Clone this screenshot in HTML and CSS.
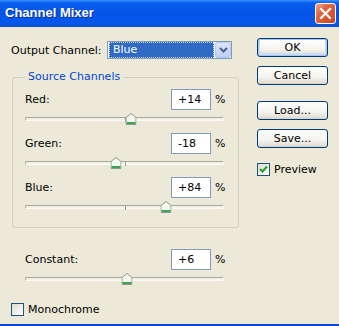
FILE: index.html
```html
<!DOCTYPE html>
<html lang="en">
<head>
    <meta charset="UTF-8">
    <meta name="viewport" content="width=device-width, initial-scale=1.0">
    <title>Channel Mixer</title>
    <link rel="stylesheet" href="styles.css">
</head>
<body>
    <div class="window">
        <!-- title bar -->
        <div class="titlebar">
            <span class="title">Channel Mixer</span>
            <span class="close">
                <svg width="13" height="13" viewBox="0 0 13 13"><path d="M2 2 L11 11 M11 2 L2 11" stroke="#fff" stroke-width="2.2" stroke-linecap="square"/></svg>
            </span>
        </div>

        <div class="client">
            <div class="main">
                <div class="output-row">
                    <span class="output-label">Output Channel:</span>
                    <div class="select">
                        <span class="select-value">Blue</span>
                        <span class="select-arrow">
                            <svg width="9" height="6" viewBox="0 0 9 6"><path d="M1 1 L4.5 4.5 L8 1" fill="none" stroke="#4d6185" stroke-width="2"/></svg>
                        </span>
                    </div>
                </div>

                <fieldset class="group">
                    <legend>Source Channels</legend>

                    <div class="channel">
                        <div class="channel-head">
                            <span class="name">Red:</span>
                            <span class="field">+14</span>
                            <span class="pct">%</span>
                        </div>
                        <div class="slider">
                            <span class="track"></span>
                            <span class="tick"></span>
                            <span class="thumb" style="left: 53.5%"><svg width="11" height="12" viewBox="0 0 11 12"><path d="M0.5 11.5 V4.5 L5.5 0.5 L10.5 4.5 V11.5 Z" fill="#f4f8f0" stroke="#8c9a8c"/><path d="M1 10 H10" stroke="#3aa651" stroke-width="2"/></svg></span>
                        </div>
                    </div>

                    <div class="channel">
                        <div class="channel-head">
                            <span class="name">Green:</span>
                            <span class="field">-18</span>
                            <span class="pct">%</span>
                        </div>
                        <div class="slider">
                            <span class="track"></span>
                            <span class="tick"></span>
                            <span class="thumb" style="left: 45.5%"><svg width="11" height="12" viewBox="0 0 11 12"><path d="M0.5 11.5 V4.5 L5.5 0.5 L10.5 4.5 V11.5 Z" fill="#f4f8f0" stroke="#8c9a8c"/><path d="M1 10 H10" stroke="#3aa651" stroke-width="2"/></svg></span>
                        </div>
                    </div>

                    <div class="channel">
                        <div class="channel-head">
                            <span class="name">Blue:</span>
                            <span class="field">+84</span>
                            <span class="pct">%</span>
                        </div>
                        <div class="slider">
                            <span class="track"></span>
                            <span class="tick"></span>
                            <span class="thumb" style="left: 71%"><svg width="11" height="12" viewBox="0 0 11 12"><path d="M0.5 11.5 V4.5 L5.5 0.5 L10.5 4.5 V11.5 Z" fill="#f4f8f0" stroke="#8c9a8c"/><path d="M1 10 H10" stroke="#3aa651" stroke-width="2"/></svg></span>
                        </div>
                    </div>
                </fieldset>

                <div class="channel constant">
                    <div class="channel-head">
                        <span class="name">Constant:</span>
                        <span class="field">+6</span>
                        <span class="pct">%</span>
                    </div>
                    <div class="slider">
                        <span class="track"></span>
                        <span class="thumb" style="left: 51.5%"><svg width="11" height="12" viewBox="0 0 11 12"><path d="M0.5 11.5 V4.5 L5.5 0.5 L10.5 4.5 V11.5 Z" fill="#f4f8f0" stroke="#8c9a8c"/><path d="M1 10 H10" stroke="#3aa651" stroke-width="2"/></svg></span>
                    </div>
                </div>

                <div class="check mono">
                    <span class="box"></span>
                    <span>Monochrome</span>
                </div>
            </div>

            <div class="side">
                <span class="btn default">OK</span>
                <span class="btn">Cancel</span>
                <span class="btn load">Load...</span>
                <span class="btn">Save...</span>
                <div class="check preview">
                    <span class="box checked">
                        <svg width="11" height="11" viewBox="0 0 11 11"><path d="M2 5 L4.5 7.5 L9 2.5" fill="none" stroke="#21a121" stroke-width="2"/></svg>
                    </span>
                    <span>Preview</span>
                </div>
            </div>
        </div>
    </div>
</body>
</html>
```

FILE: styles.css
```css
/* base */
body {
    margin: 0;
    padding: 0;
    font-family: 'DejaVu Sans', 'Verdana', sans-serif;
    font-size: 11px;
    color: #000;
}
.window {
    width: 339px;
    height: 324px;
    background: #ece9d8;
    border-bottom: 2px solid #0a46d8;
    display: flex;
    flex-direction: column;
    overflow: hidden;
}

/* title bar */
.titlebar {
    height: 27px;
    flex: none;
    display: flex;
    align-items: center;
    justify-content: space-between;
    padding: 0 3px 0 5px;
    background: linear-gradient(to bottom, #3d95ff 0%, #0a5ff0 10%, #0554e6 45%, #0658ea 85%, #0a4fd8 100%);
}
.title {
    font-family: 'Liberation Sans', Arial, sans-serif;
    font-weight: bold;
    font-size: 13px;
    color: #fff;
    text-shadow: 1px 1px 0 #0a2f9a;
    margin-top: -2px;
}
.close {
    width: 19px;
    height: 19px;
    margin-top: -1px;
    border: 1px solid #fff;
    border-radius: 3px;
    background: linear-gradient(135deg, #f0a48c 0%, #df6642 35%, #c8461f 100%);
    display: flex;
    align-items: center;
    justify-content: center;
}

/* dialog body */
.client {
    flex: 1;
    display: flex;
    justify-content: space-between;
    padding: 0 11px 0 10px;
}
.main {
    width: 229px;
    padding-top: 14px;
}
.output-row {
    display: flex;
    align-items: center;
    height: 18px;
}
.output-label {
    width: 96px;
    padding-left: 1px;
}
.select {
    width: 123px;
    height: 16px;
    border: 1px solid #7f9db9;
    background: #fff;
    display: flex;
    padding: 0;
}
.select-value {
    flex: 1;
    margin: 0 1px 0 1px;
    background: #316ac5;
    color: #fff;
    outline: 1px dotted #c8d8f0;
    outline-offset: -1px;
    padding-left: 4px;
    line-height: 16px;
}
.select-arrow {
    width: 16px;
    height: 16px;
    box-sizing: border-box;
    border: 1px solid #b9c9ef;
    border-radius: 2px;
    background: linear-gradient(to bottom, #dce6fd, #bccdf6);
    display: flex;
    align-items: center;
    justify-content: center;
}

/* group box */
.group {
    margin: 11px 0 0 2px;
    padding: 5px 12px 14px 12px;
    border: 1px solid #d0d0bf;
    border-radius: 3px;
    width: 201px;
}
.group legend {
    color: #0046d5;
    line-height: 14px;
    padding: 0 3px;
    margin-left: 0;
}

/* channel rows */
.channel + .channel {
    margin-top: 8px;
}
.channel-head {
    display: flex;
    align-items: center;
    width: 201px;
    height: 21px;
}
.name {
    flex: 1;
}
.field {
    width: 40px;
    height: 21px;
    box-sizing: border-box;
    border: 1px solid #7f9db9;
    background: #fff;
    padding-left: 6px;
    line-height: 19px;
}
.pct {
    width: 11px;
    margin-left: 4px;
}
.slider {
    position: relative;
    width: 199px;
    height: 12px;
    margin-top: 3px;
    display: flex;
    align-items: center;
}
.track {
    flex: 1;
    height: 2px;
    border-radius: 2px;
    border: 1px solid;
    border-color: #a6a598 #fbfbf8 #fbfbf8 #a6a598;
    background: #f3f2ea;
}
.tick {
    position: absolute;
    left: 50%;
    top: 5px;
    width: 1px;
    height: 4px;
    background: #9a9a90;
}
.thumb {
    position: absolute;
    top: 0;
    width: 11px;
    height: 12px;
    transform: translateX(-50%);
}
.thumb svg {
    display: block;
}
.constant {
    margin: 21px 0 0 15px;
}

/* checkboxes */
.check {
    display: flex;
    align-items: center;
    gap: 4px;
    height: 13px;
}
.box {
    width: 11px;
    height: 11px;
    border: 1px solid #1c5180;
    background: linear-gradient(135deg, #dcdcd5, #ffffff);
    display: flex;
}
.mono {
    margin: 18px 0 0 1px;
}

/* buttons */
.side {
    width: 71px;
    padding-top: 11px;
    display: flex;
    flex-direction: column;
}
.btn {
    height: 19px;
    box-sizing: border-box;
    border: 1px solid #003c74;
    border-radius: 3px;
    background: linear-gradient(to bottom, #ffffff 0%, #f4f3ee 60%, #e3e0d6 90%, #d6d0c5 100%);
    text-align: center;
    line-height: 17px;
}
.btn + .btn {
    margin-top: 9px;
}
.btn.load {
    margin-top: 16px;
}
.btn.default {
    box-shadow: inset 0 0 0 1px #a9c4f0, inset 0 -1px 0 2px #cadcf7;
}
.preview {
    margin-top: 15px;
}
```
